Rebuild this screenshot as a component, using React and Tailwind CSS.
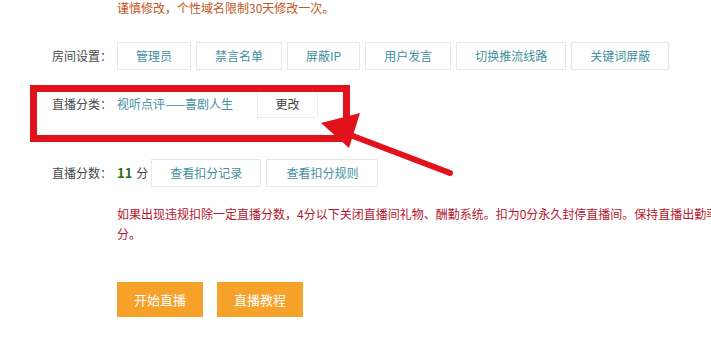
const roomButtons = ["管理员", "禁言名单", "屏蔽IP", "用户发言", "切换推流线路", "关键词屏蔽"];

function LineButton({ children, className = "" }) {
  return (
    <button
      className={`h-[28px] px-[18px] bg-white border border-[#e6e9ea] text-[12px] text-[#3f8f9e] ${className}`}
    >
      {children}
    </button>
  );
}

export default function App() {
  return (
    <div
      className="relative w-[711px] h-[362px] overflow-hidden bg-white text-[12px] text-[#4a4a4a]"
      style={{ fontFamily: '"Noto Sans CJK SC", "Noto Sans", sans-serif' }}
    >
      <div className="pl-[117px] pt-[1px] leading-[14px] text-[#c5551c]">
        谨慎修改，个性域名限制30天修改一次。
      </div>

      <div className="grid grid-cols-[65px_1fr] ml-[52px] mt-[27px] items-center">
        {/* room settings */}
        <div>房间设置：</div>
        <div className="flex gap-[5px]">
          {roomButtons.map((b) => (
            <LineButton key={b} className={b === "屏蔽IP" ? "px-[17px]" : ""}>
              {b}
            </LineButton>
          ))}
        </div>

        {/* category */}
        <div className="mt-[19px]">直播分类：</div>
        <div className="mt-[19px] flex items-center">
          <span className="text-[#3f8f9e] w-[140px]">视听点评——喜剧人生</span>
          <button className="h-[29px] w-[61px] bg-white border border-[#eceeee] text-[#444]">更改</button>
        </div>

        {/* score */}
        <div className="mt-[41px]">直播分数：</div>
        <div className="mt-[41px] flex items-center">
          <span className="font-bold text-[#2f6b12] text-[13px]">11</span>
          <span className="ml-[4px] mr-[3px] text-[#444]">分</span>
          <LineButton className="h-[27px]">查看扣分记录</LineButton>
          <LineButton className="h-[27px] ml-[5px] px-[19px]">查看扣分规则</LineButton>
        </div>
      </div>

      <div className="pl-[117px] mt-[17px] leading-[20px] text-[#b3162e] whitespace-nowrap">
        如果出现违规扣除一定直播分数，4分以下关闭直播间礼物、酬勤系统。扣为0分永久封停直播间。保持直播出勤率，每周可恢复1
        <br />
        分。
      </div>

      <div className="pl-[117px] mt-[38px] flex gap-[14px]">
        <button className="w-[86px] h-[35px] bg-[#f6a12a] text-white text-[13px]">开始直播</button>
        <button className="w-[86px] h-[35px] bg-[#f6a12a] text-white text-[13px]">直播教程</button>
      </div>

      {/* red annotation box */}
      <div className="absolute left-[30px] top-[85px] w-[320px] h-[57px] border-[7px] border-[#e2121c] pointer-events-none" />

      {/* red arrow */}
      <svg className="absolute left-0 top-0 pointer-events-none" width="711" height="362">
        <line x1="450" y1="173" x2="345" y2="133" stroke="#e2121c" strokeWidth="6" strokeLinecap="round" />
        <polygon points="321,123 360,113 349,148" fill="#e2121c" />
      </svg>
    </div>
  );
}
